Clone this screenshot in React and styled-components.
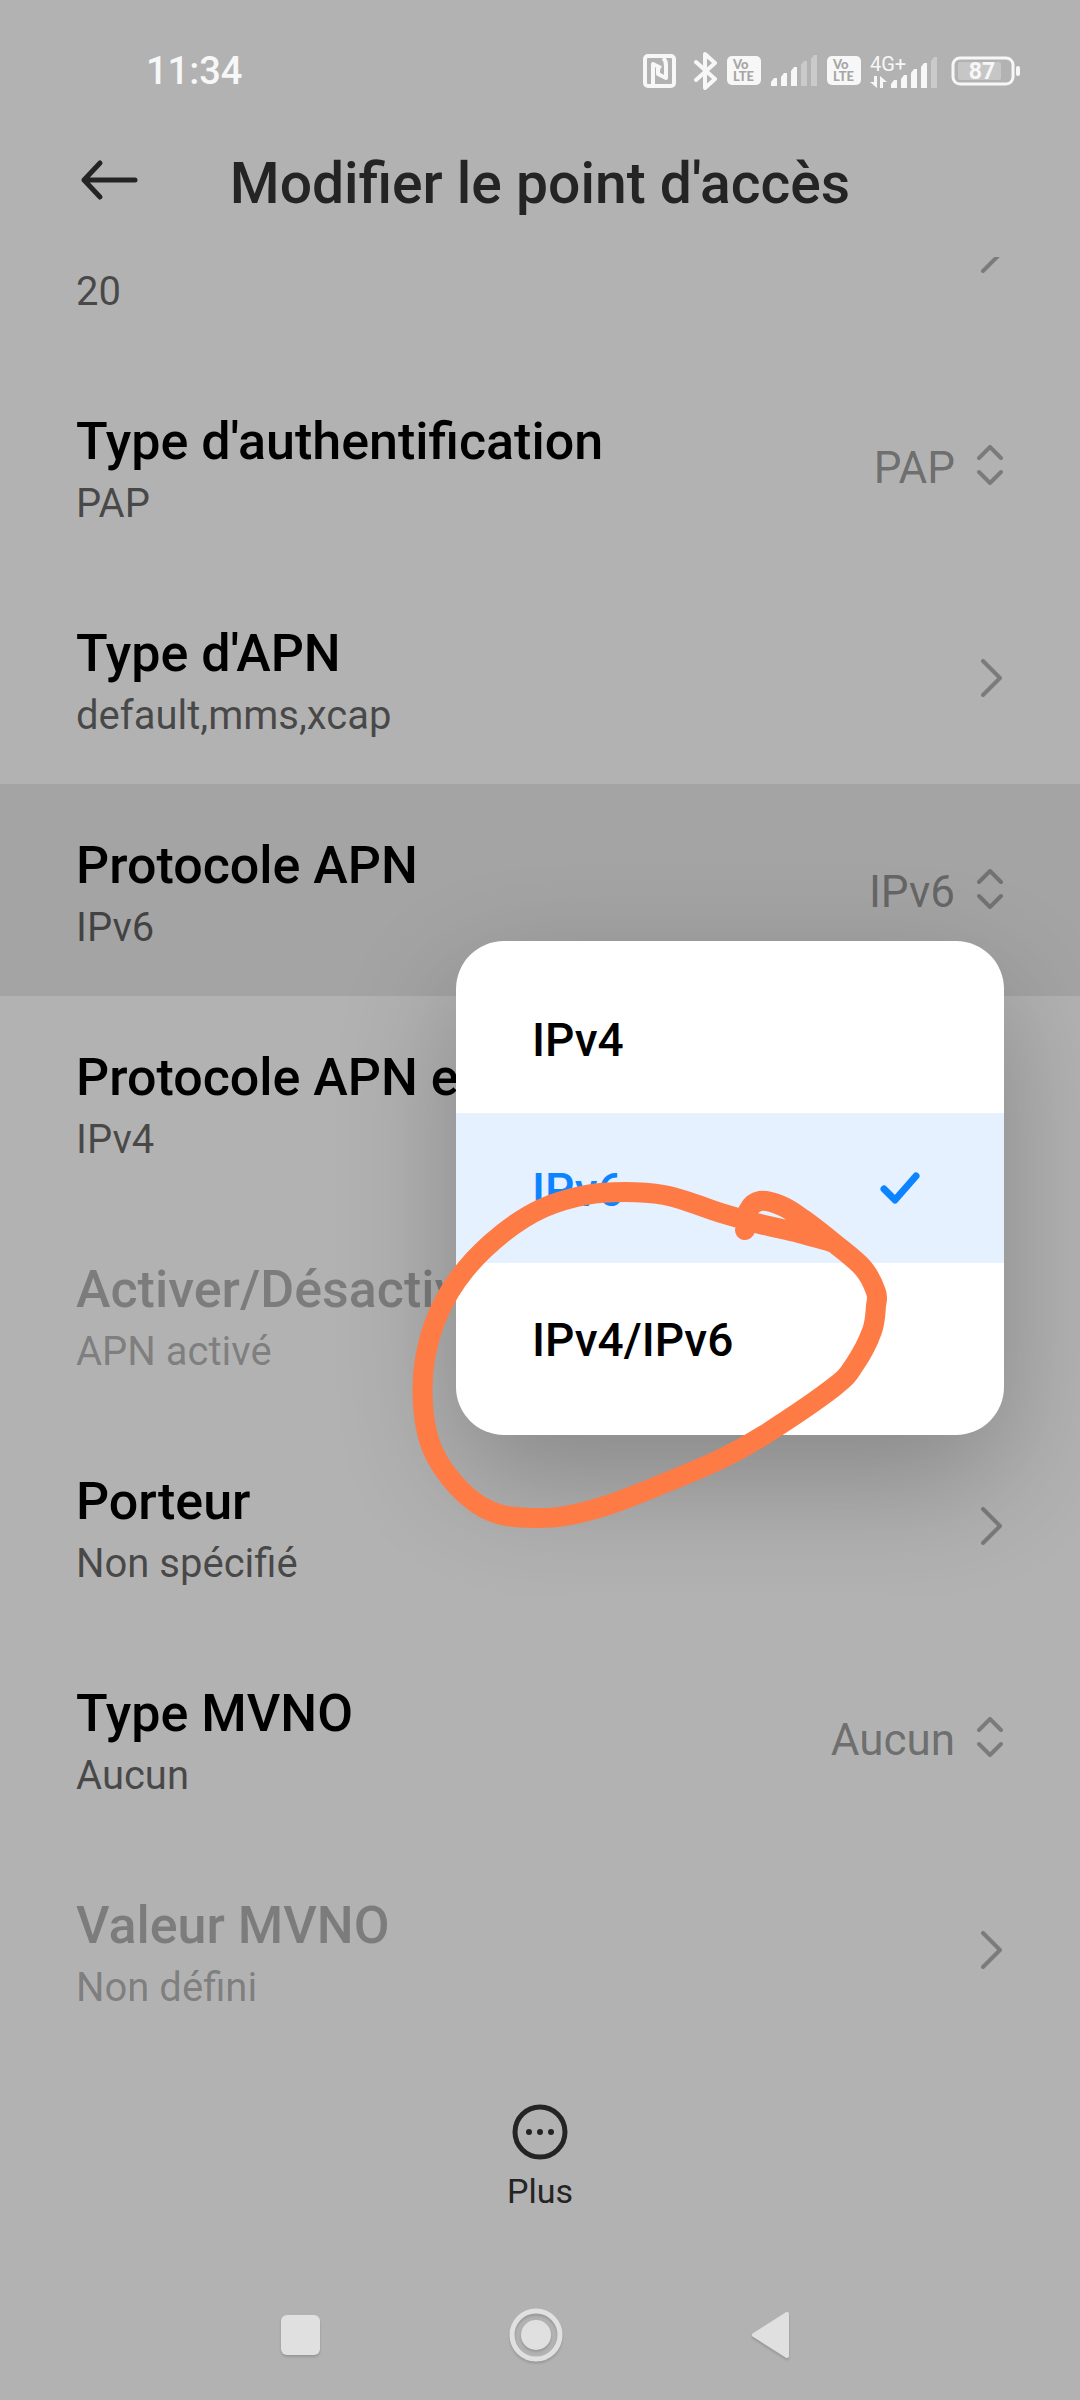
import React, { useState } from "react";
import styled, { createGlobalStyle } from "styled-components";

const GlobalStyle = createGlobalStyle`
  * {
    box-sizing: border-box;
  }

  body {
    margin: 0;
    background-color: #b2b2b2;
    font-family: Roboto, "Liberation Sans", sans-serif;
    color: #000;
  }

  button,
  select {
    font-family: inherit;
    color: inherit;
    background: none;
    border: 0;
    padding: 0;
    margin: 0;
  }

  svg {
    display: block;
    flex-shrink: 0;
  }
`;

const Page = styled.div`
  display: flex;
  flex-direction: column;
  min-height: 100vh;
  overflow: hidden;
`;

const StatusBar = styled.div`
  display: flex;
  align-items: center;
  justify-content: space-between;
  height: 106px;
  padding: 35px 60px 0 146px;
  color: #f7f7f7;
`;

const Clock = styled.time`
  font-size: 38px;
  line-height: 72px;
  font-weight: 500;
`;

const StatusIcons = styled.div`
  display: flex;
  align-items: center;
  gap: 9px;
`;

const TopBar = styled.header`
  display: grid;
  grid-template-columns: 1fr auto 1fr;
  align-items: center;
  height: 151px;
  padding: 0 80px;
  color: #242424;

  h1 {
    margin: 0;
    padding-top: 4px;
    font-size: 57px;
    line-height: 72px;
    font-weight: 500;
  }
`;

const BackButton = styled.button`
  justify-self: start;
  padding-bottom: 4px;
`;

const List = styled.main`
  flex-grow: 1;
  overflow: hidden;
`;

// La liste est défilée : la première ligne passe sous l'en-tête
const Scrolled = styled.div`
  margin-top: -109px;
`;

const Row = styled.div`
  position: relative;
  display: flex;
  align-items: center;
  justify-content: space-between;
  width: 100%;
  min-height: 212px;
  padding: 0 76px;
  text-align: left;
  background-color: ${(props) =>
    props.$active ? "rgba(0, 0, 0, 0.08)" : "transparent"};
`;

const Texts = styled.div`
  display: flex;
  flex-direction: column;
  gap: 2px;
  padding-top: 10px;
  color: ${(props) => (props.$off ? "rgba(0, 0, 0, 0.3)" : "#000")};
`;

const Title = styled.label`
  font-size: 52px;
  line-height: 64px;
  font-weight: 500;
  white-space: nowrap;
`;

const Summary = styled.span`
  font-size: 40px;
  line-height: 56px;
  color: ${(props) => (props.$off ? "inherit" : "rgba(0, 0, 0, 0.6)")};
`;

const Picker = styled.div`
  display: flex;
  align-items: center;
  gap: 21px;
  color: rgba(0, 0, 0, 0.4);
`;

const Select = styled.select`
  appearance: none;
  padding-top: 4px;
  font-size: 44px;
  line-height: 52px;
  text-align: right;
  text-align-last: right;
`;

const Popup = styled.div`
  position: absolute;
  z-index: 1;
  top: 157px;
  right: 76px;
  width: 548px;
  padding: 22px 0;
  border-radius: 48px;
  background-color: #fff;
  box-shadow: 0 44px 120px rgba(0, 0, 0, 0.24);
`;

const Choice = styled.button`
  display: flex;
  align-items: center;
  justify-content: space-between;
  width: 100%;
  height: 150px;
  padding: 3px 84px 0 76px;
  font-size: 46px;
  font-weight: 500;
  color: ${(props) => (props.$checked ? "#0d84ff" : "#000")};
  background-color: ${(props) => (props.$checked ? "#e5f1ff" : "transparent")};
`;

const Scribble = styled.svg`
  position: absolute;
  top: 241px;
  left: -46px;
  pointer-events: none;
`;

const Toolbar = styled.footer`
  display: flex;
  justify-content: center;
  padding: 48px 0 59px;
`;

const ToolButton = styled.button`
  display: flex;
  flex-direction: column;
  align-items: center;
  gap: 11px;
  font-size: 34px;
  line-height: 40px;
  color: #242424;
`;

const NavBar = styled.nav`
  display: flex;
  align-items: center;
  justify-content: center;
  gap: 176px;
  height: 130px;
  padding-right: 8px;
  color: #e0e0e0;

  svg {
    filter: drop-shadow(0 2px 1px rgba(0, 0, 0, 0.15));
  }
`;

// Tracé du cercle fait à la main
const points = [
  [745, 1230], [748, 1211], [760, 1201], [782, 1206], [803, 1219],
  [834, 1243], [863, 1268], [876, 1292], [876, 1306], [872, 1331],
  [855, 1364], [834, 1387], [764, 1435], [721, 1459], [660, 1485],
  [608, 1505], [565, 1516], [534, 1518], [502, 1515], [476, 1503],
  [450, 1478], [431, 1446], [423, 1405], [425, 1359], [439, 1312],
  [465, 1270], [503, 1233], [543, 1208], [586, 1195], [625, 1192],
  [664, 1195], [695, 1204], [721, 1213], [760, 1224], [799, 1233],
  [831, 1242],
];

const toPath = (pts) =>
  pts.slice(0, -1).reduce((d, p1, i) => {
    const p0 = pts[i - 1] || p1;
    const p2 = pts[i + 1];
    const p3 = pts[i + 2] || p2;
    const a = [p1[0] + (p2[0] - p0[0]) / 6, p1[1] + (p2[1] - p0[1]) / 6];
    const b = [p2[0] - (p3[0] - p1[0]) / 6, p2[1] - (p3[1] - p1[1]) / 6];
    return `${d} C${a} ${b} ${p2}`;
  }, `M${pts[0]}`);

const NfcIcon = () => (
  <svg width="33" height="34" viewBox="0 0 33 34" fill="none" stroke="currentColor">
    <rect x="2" y="2" width="29" height="30" rx="3" strokeWidth="4" />
    <path d="M10 30V10L18 14" strokeWidth="4" strokeLinejoin="round" />
    <path d="M20 4C23 6 23 9 23 13V24L15 20V13" strokeWidth="4" strokeLinejoin="round" />
  </svg>
);

const BluetoothIcon = () => (
  <svg width="24" height="38" viewBox="0 0 24 38" fill="none" stroke="currentColor">
    <path
      d="M2 10L21 27L11 36V2L21 11L2 28"
      strokeWidth="4"
      strokeLinecap="round"
      strokeLinejoin="round"
    />
  </svg>
);

const VoLteIcon = () => (
  <svg width="34" height="29" viewBox="0 0 34 29" fontFamily="Lato" fontWeight="900">
    <rect width="34" height="29" rx="5" fill="currentColor" />
    <text x="6" y="13" fontSize="13" fill="#a6a6a6">Vo</text>
    <text x="6" y="25" fontSize="13" fill="#a6a6a6">LTE</text>
  </svg>
);

const SignalIcon = ({ level }) => (
  <svg width="48" height="31" viewBox="0 0 48 31" fill="currentColor">
    {[8, 13, 19, 25, 31].map((h, i) => (
      <path
        key={h}
        d={`M${i * 10 + 1} 31V${35 - h}L${i * 10 + 4} ${31 - h}H${i * 10 + 7}V31Z`}
        opacity={i < level ? 1 : 0.35}
      />
    ))}
  </svg>
);

const Network = styled.div`
  display: flex;
  align-items: flex-end;
  gap: 3px;
  margin-right: 4px;
`;

const NetworkType = styled.div`
  display: flex;
  flex-direction: column;
  gap: 2px;
  width: 17px;
  white-space: nowrap;
  font-size: 20px;
  line-height: 20px;
`;

const BatteryIcon = () => (
  <svg width="69" height="30" viewBox="0 0 69 30">
    <rect x="2" y="2" width="60" height="26" rx="7" fill="none" stroke="currentColor" strokeWidth="3" />
    <rect x="7" y="6" width="43" height="18" rx="2" fill="#c6c6c6" />
    <rect x="65" y="10" width="4" height="10" rx="2" fill="currentColor" />
    <text x="31" y="23" fontSize="23" fontWeight="700" textAnchor="middle" fill="currentColor">
      87
    </text>
  </svg>
);

const UpDownIcon = () => (
  <svg width="28" height="44" viewBox="0 0 28 44" fill="none" stroke="#000" opacity="0.3">
    <path
      d="M3 14L14 3L25 14M3 28L14 39L25 28"
      strokeWidth="4"
      strokeLinecap="round"
      strokeLinejoin="round"
    />
  </svg>
);

const ChevronIcon = () => (
  <svg width="28" height="44" viewBox="0 0 28 44" fill="none" stroke="#000" opacity="0.3">
    <path d="M7 5L24 22L7 39" strokeWidth="4" strokeLinecap="round" strokeLinejoin="round" />
  </svg>
);

function LinkRow({ title, summary, off, arrow = true }) {
  return (
    <Row as="button" disabled={off}>
      <Texts $off={off}>
        <Title as="span">{title}</Title>
        <Summary $off={off}>{summary}</Summary>
      </Texts>
      {arrow && <ChevronIcon />}
    </Row>
  );
}

function SelectRow({ id, title, value, active, children }) {
  return (
    <Row $active={active}>
      <Texts>
        <Title htmlFor={id}>{title}</Title>
        <Summary>{value}</Summary>
      </Texts>
      <Picker>
        <Select id={id} value={value} onChange={() => {}}>
          <option>{value}</option>
        </Select>
        <UpDownIcon />
      </Picker>
      {children}
    </Row>
  );
}

export default function App() {
  const [protocol, setProtocol] = useState("IPv6");

  return (
    <Page>
      <GlobalStyle />
      <StatusBar>
        <Clock>11:34</Clock>
        <StatusIcons>
          <NfcIcon />
          <span />
          <BluetoothIcon />
          <VoLteIcon />
          <SignalIcon level={3} />
          <VoLteIcon />
          <Network>
            <NetworkType>
              4G+
              <svg width="17" height="12" viewBox="0 0 17 12" fill="currentColor">
                <path d="M4 0H7V12L0 6H4ZM10 12V0L17 6H13V12Z" />
              </svg>
            </NetworkType>
            <SignalIcon level={4} />
          </Network>
          <BatteryIcon />
        </StatusIcons>
      </StatusBar>

      <TopBar>
        <BackButton aria-label="Retour">
          <svg width="60" height="44" viewBox="0 0 60 44" fill="none" stroke="currentColor">
            <path
              d="M55 22H4M20 5L4 22L20 39"
              strokeWidth="5"
              strokeLinecap="round"
              strokeLinejoin="round"
            />
          </svg>
        </BackButton>
        <h1>Modifier le point d'accès</h1>
      </TopBar>

      <List>
        <Scrolled>
          <LinkRow title={"\u00a0"} summary="20" />
          <SelectRow id="auth" title="Type d'authentification" value="PAP" />
          <LinkRow title="Type d'APN" summary="default,mms,xcap" />
          <SelectRow id="protocol" title="Protocole APN" value={protocol} active>
            <Popup role="listbox" aria-label="Protocole APN">
              {["IPv4", "IPv6", "IPv4/IPv6"].map((name) => (
                <Choice
                  key={name}
                  role="option"
                  aria-selected={name === protocol}
                  $checked={name === protocol}
                  onClick={() => setProtocol(name)}
                >
                  {name}
                  {name === protocol && (
                    <svg width="42" height="36" viewBox="0 0 42 36" fill="none" stroke="currentColor">
                      <path
                        d="M6 17L17 28L38 4"
                        strokeWidth="7"
                        strokeLinecap="round"
                        strokeLinejoin="round"
                      />
                    </svg>
                  )}
                </Choice>
              ))}
              <Scribble width="480" height="350" viewBox="410 1182 480 350" fill="none">
                <path
                  d={toPath(points)}
                  stroke="#ff7b45"
                  strokeWidth="20"
                  strokeLinecap="round"
                  strokeLinejoin="round"
                />
              </Scribble>
            </Popup>
          </SelectRow>
          <LinkRow title="Protocole APN en" summary="IPv4" arrow={false} />
          <LinkRow title="Activer/Désactiver" summary="APN activé" arrow={false} off />
          <LinkRow title="Porteur" summary="Non spécifié" />
          <SelectRow id="mvno" title="Type MVNO" value="Aucun" />
          <LinkRow title="Valeur MVNO" summary="Non défini" off />
        </Scrolled>
      </List>

      <Toolbar>
        <ToolButton>
          <svg width="56" height="56" viewBox="0 0 56 56" fill="currentColor">
            <circle cx="28" cy="28" r="25" fill="none" stroke="currentColor" strokeWidth="5" />
            <circle cx="17" cy="28" r="3" />
            <circle cx="28" cy="28" r="3" />
            <circle cx="39" cy="28" r="3" />
          </svg>
          Plus
        </ToolButton>
      </Toolbar>

      <NavBar>
        <button aria-label="Applications récentes">
          <svg width="60" height="60" viewBox="0 0 60 60" fill="currentColor">
            <rect x="11" y="10" width="39" height="40" rx="6" />
          </svg>
        </button>
        <button aria-label="Accueil">
          <svg width="60" height="60" viewBox="0 0 60 60" fill="currentColor">
            <circle cx="30" cy="30" r="24" fill="none" stroke="currentColor" strokeWidth="5" />
            <circle cx="30" cy="30" r="15" />
          </svg>
        </button>
        <button aria-label="Retour arrière">
          <svg width="60" height="60" viewBox="0 0 60 60" fill="currentColor" stroke="currentColor">
            <path d="M12 30L45 9V51Z" strokeWidth="4" strokeLinejoin="round" />
          </svg>
        </button>
      </NavBar>
    </Page>
  );
}
